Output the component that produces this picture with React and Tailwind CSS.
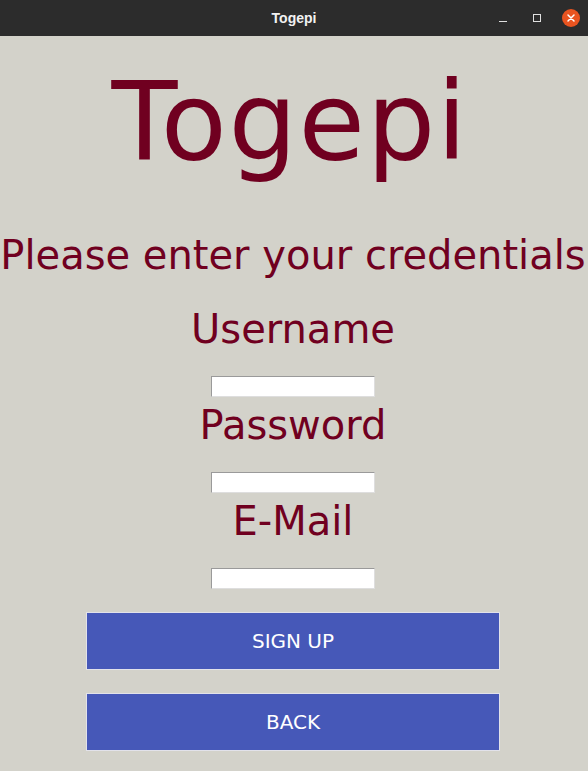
import { useState } from 'react'

const fieldClass =
  'block w-[164px] h-[21px] bg-white border border-t-[#9a9a9a] border-l-[#9a9a9a] border-b-[#dedede] border-r-[#dedede] px-1 text-[13px] outline-none'

function Field({ label, type = 'text', value, onChange }) {
  return (
    <div className="flex flex-col items-center">
      <label className="text-[40px] leading-[48px] text-[#700020]">{label}</label>
      <input type={type} value={value} onChange={e => onChange(e.target.value)} className={`${fieldClass} mt-[23px]`} />
    </div>
  )
}

export default function App() {
  const [username, setUsername] = useState('')
  const [password, setPassword] = useState('')
  const [email, setEmail] = useState('')

  return (
    <div className="w-[588px] h-[771px] flex flex-col bg-[#d3d2ca] overflow-hidden" style={{ fontFamily: '"DejaVu Sans", sans-serif' }}>
      {/* window title bar */}
      <div className="h-[36px] shrink-0 bg-[#2c2c2c] flex items-center relative">
        <span className="flex-1 text-center text-[14px] font-bold text-[#f2f2f2]" style={{ fontFamily: '"Liberation Sans", Arial, sans-serif' }}>
          Togepi
        </span>
        <div className="absolute right-[8px] top-0 h-full flex items-center">
          <span className="block w-[8px] h-[1px] bg-[#e0e0e0] mt-[6px]" />
          <span className="block w-[8px] h-[8px] border border-[#e0e0e0] ml-[26px] mt-[-1px]" />
          <span className="w-[18px] h-[18px] rounded-full bg-[#e95420] flex items-center justify-center ml-[21px]">
            <svg width="10" height="10" viewBox="0 0 10 10" stroke="white" strokeWidth="1.5" strokeLinecap="round">
              <path d="M2 2l6 6M8 2l-6 6" />
            </svg>
          </span>
        </div>
      </div>

      <main className="flex flex-col items-center pt-[24px] pr-[2px]">
        <h1 className="text-[108px] leading-[124px] tracking-[1.6px] text-[#700020] mr-[6px]">Togepi</h1>
        <p className="mt-[48px] text-[40px] leading-[47px] text-[#700020] whitespace-nowrap">Please enter your credentials</p>

        <div className="mt-[26px] flex flex-col gap-[4px]">
          <Field label="Username" value={username} onChange={setUsername} />
          <Field label="Password" type="password" value={password} onChange={setPassword} />
          <Field label="E-Mail" value={email} onChange={setEmail} />
        </div>

        <div className="mt-[23px] flex flex-col gap-[23px]">
          <button className="w-[414px] h-[58px] bg-[#4658b8] border border-[#e2e2ea] text-white text-[20px] uppercase">Sign up</button>
          <button className="w-[414px] h-[58px] bg-[#4658b8] border border-[#e2e2ea] text-white text-[20px] uppercase">Back</button>
        </div>
      </main>
    </div>
  )
}
